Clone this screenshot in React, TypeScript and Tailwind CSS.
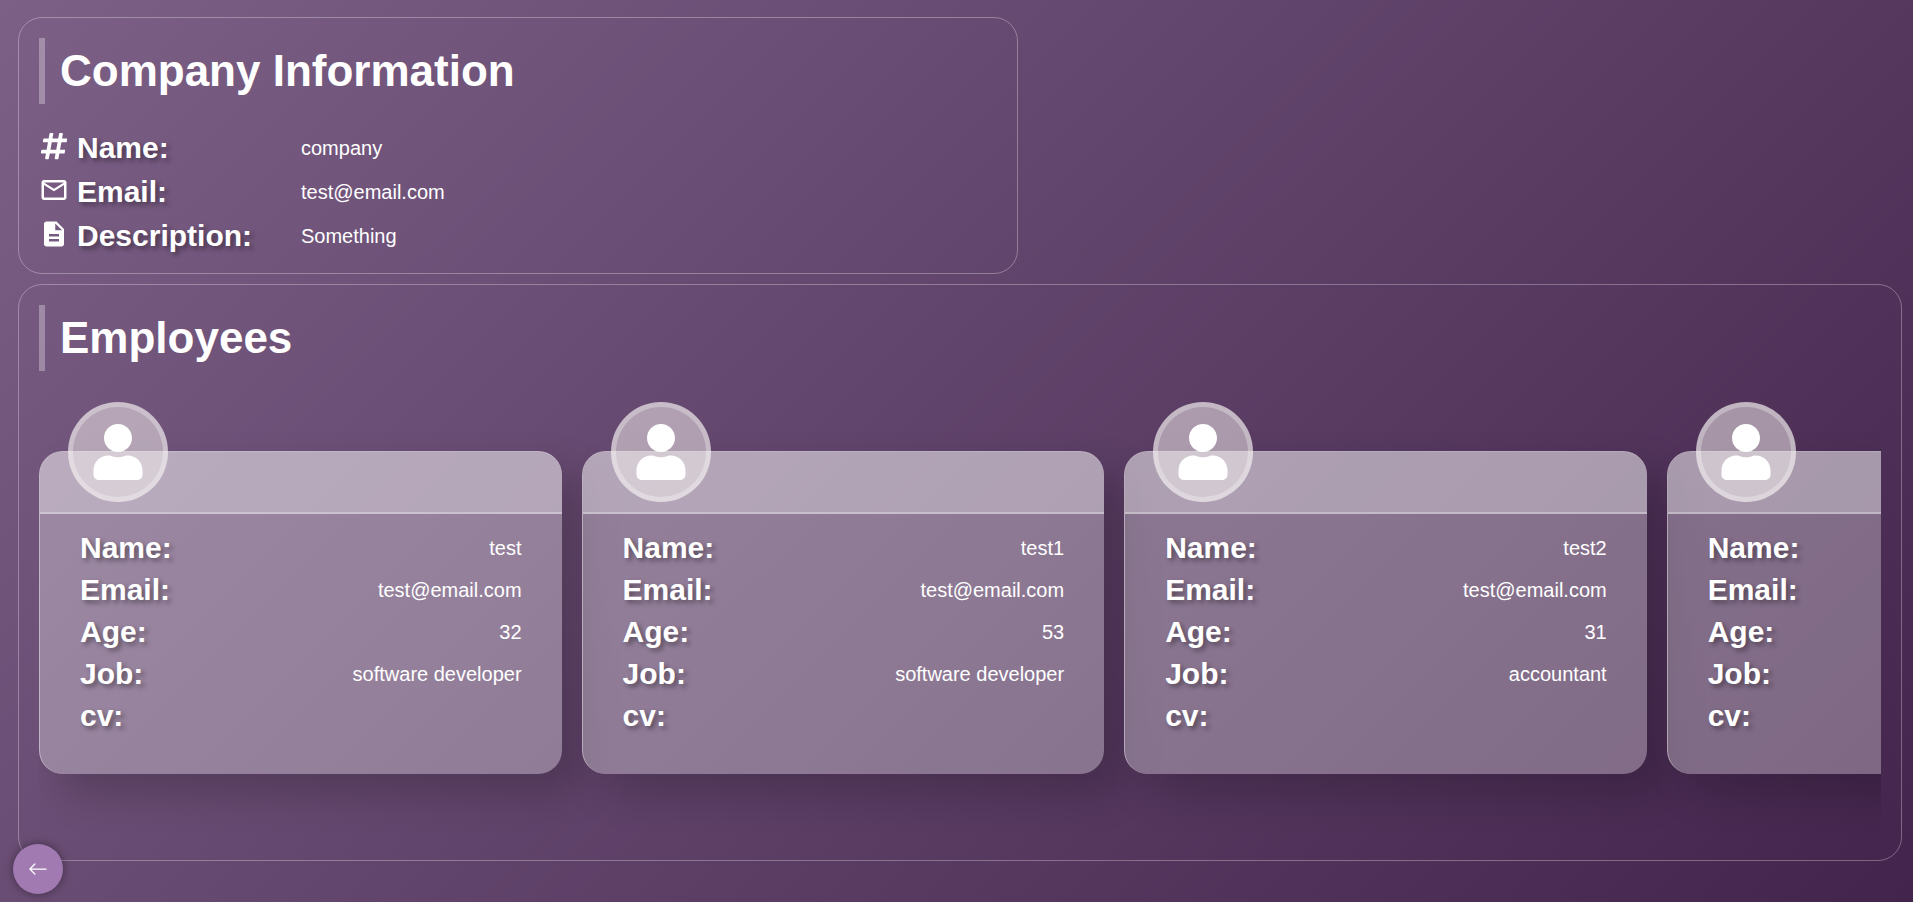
import { FaHashtag, FaUser } from "react-icons/fa";
import { MdMailOutline, MdDescription } from "react-icons/md";
import { BsArrowLeft } from "react-icons/bs";
import type { ReactNode } from "react";

type Employee = { id: number; name?: string; email?: string; age?: string; job?: string };

const employees: Employee[] = [
  { id: 1, name: "test", email: "test@email.com", age: "32", job: "software developer" },
  { id: 2, name: "test1", email: "test@email.com", age: "53", job: "software developer" },
  { id: 3, name: "test2", email: "test@email.com", age: "31", job: "accountant" },
  { id: 4 },
];

const labelClass =
  "text-[30px] leading-[42px] font-bold [text-shadow:3px_3px_5px_rgba(0,0,0,0.4)]";

function Panel({ title, className, children }: { title: string; className: string; children: ReactNode }) {
  return (
    <section className={`rounded-3xl border border-white/30 p-5 ${className}`}>
      <h1 className="border-l-[6px] border-white/30 pl-[15px] text-[44px] leading-[66px] font-bold">{title}</h1>
      {children}
    </section>
  );
}

function InfoRow({ icon, label, value }: { icon: ReactNode; label: string; value: string }) {
  return (
    <div className="flex h-11 items-center">
      <dt className={`flex w-[262px] items-center gap-2 ${labelClass}`}>
        <span className="pb-1">{icon}</span>
        {label}
      </dt>
      <dd className="text-xl">{value}</dd>
    </div>
  );
}

function CardRow({ label, value }: { label: string; value?: string }) {
  return (
    <div className="flex h-[42px] items-center justify-between">
      <dt className={labelClass}>{label}</dt>
      <dd className="text-xl">{value}</dd>
    </div>
  );
}

function EmployeeCard({ employee }: { employee: Employee }) {
  return (
    <article className="relative w-[28.37%] shrink-0 rounded-3xl border-t border-l border-white/40 bg-white/30 shadow-[20px_20px_40px_rgba(0,0,0,0.2)]">
      <div className="h-[62px] rounded-t-[23px] border-b-2 border-white/30 bg-white/30" />
      <div className="absolute -top-[50px] left-7 flex size-[100px] items-center justify-center rounded-full border-[5px] border-white/30 bg-[#ece8e8]/55">
        <FaUser className="size-14" />
      </div>
      <dl className="px-10 pt-[13px] pb-[37px]">
        <CardRow label="Name:" value={employee.name} />
        <CardRow label="Email:" value={employee.email} />
        <CardRow label="Age:" value={employee.age} />
        <CardRow label="Job:" value={employee.job} />
        <CardRow label="cv:" />
      </dl>
    </article>
  );
}

export default function App() {
  return (
    <main className="flex min-h-screen flex-col gap-2.5 bg-[linear-gradient(135deg,#7c6086,#43244c)] pt-[17px] pr-[11px] pb-10 pl-[18px] font-['Liberation_Sans',Arial,sans-serif] text-white">
      <Panel title="Company Information" className="w-full max-w-[1000px]">
        <dl className="-mb-[5px] pt-[22px]">
          <InfoRow icon={<FaHashtag className="size-[30px]" />} label="Name:" value="company" />
          <InfoRow icon={<MdMailOutline className="size-[30px]" />} label="Email:" value="test@email.com" />
          <InfoRow icon={<MdDescription className="size-[30px]" />} label="Description:" value="Something" />
        </dl>
      </Panel>

      <Panel title="Employees" className="w-full">
        <div className="flex gap-5 overflow-x-auto overflow-y-hidden pt-20 pb-[66px] [scrollbar-width:none]">
          {employees.map((employee) => (
            <EmployeeCard key={employee.id} employee={employee} />
          ))}
        </div>
      </Panel>

      <button
        type="button"
        aria-label="Back"
        className="fixed bottom-2 left-[13px] flex size-[50px] items-center justify-center rounded-full bg-[#a17ab1] shadow-[0_0_10px_rgba(0,0,0,0.4)]"
      >
        <BsArrowLeft className="size-5" />
      </button>
    </main>
  );
}
